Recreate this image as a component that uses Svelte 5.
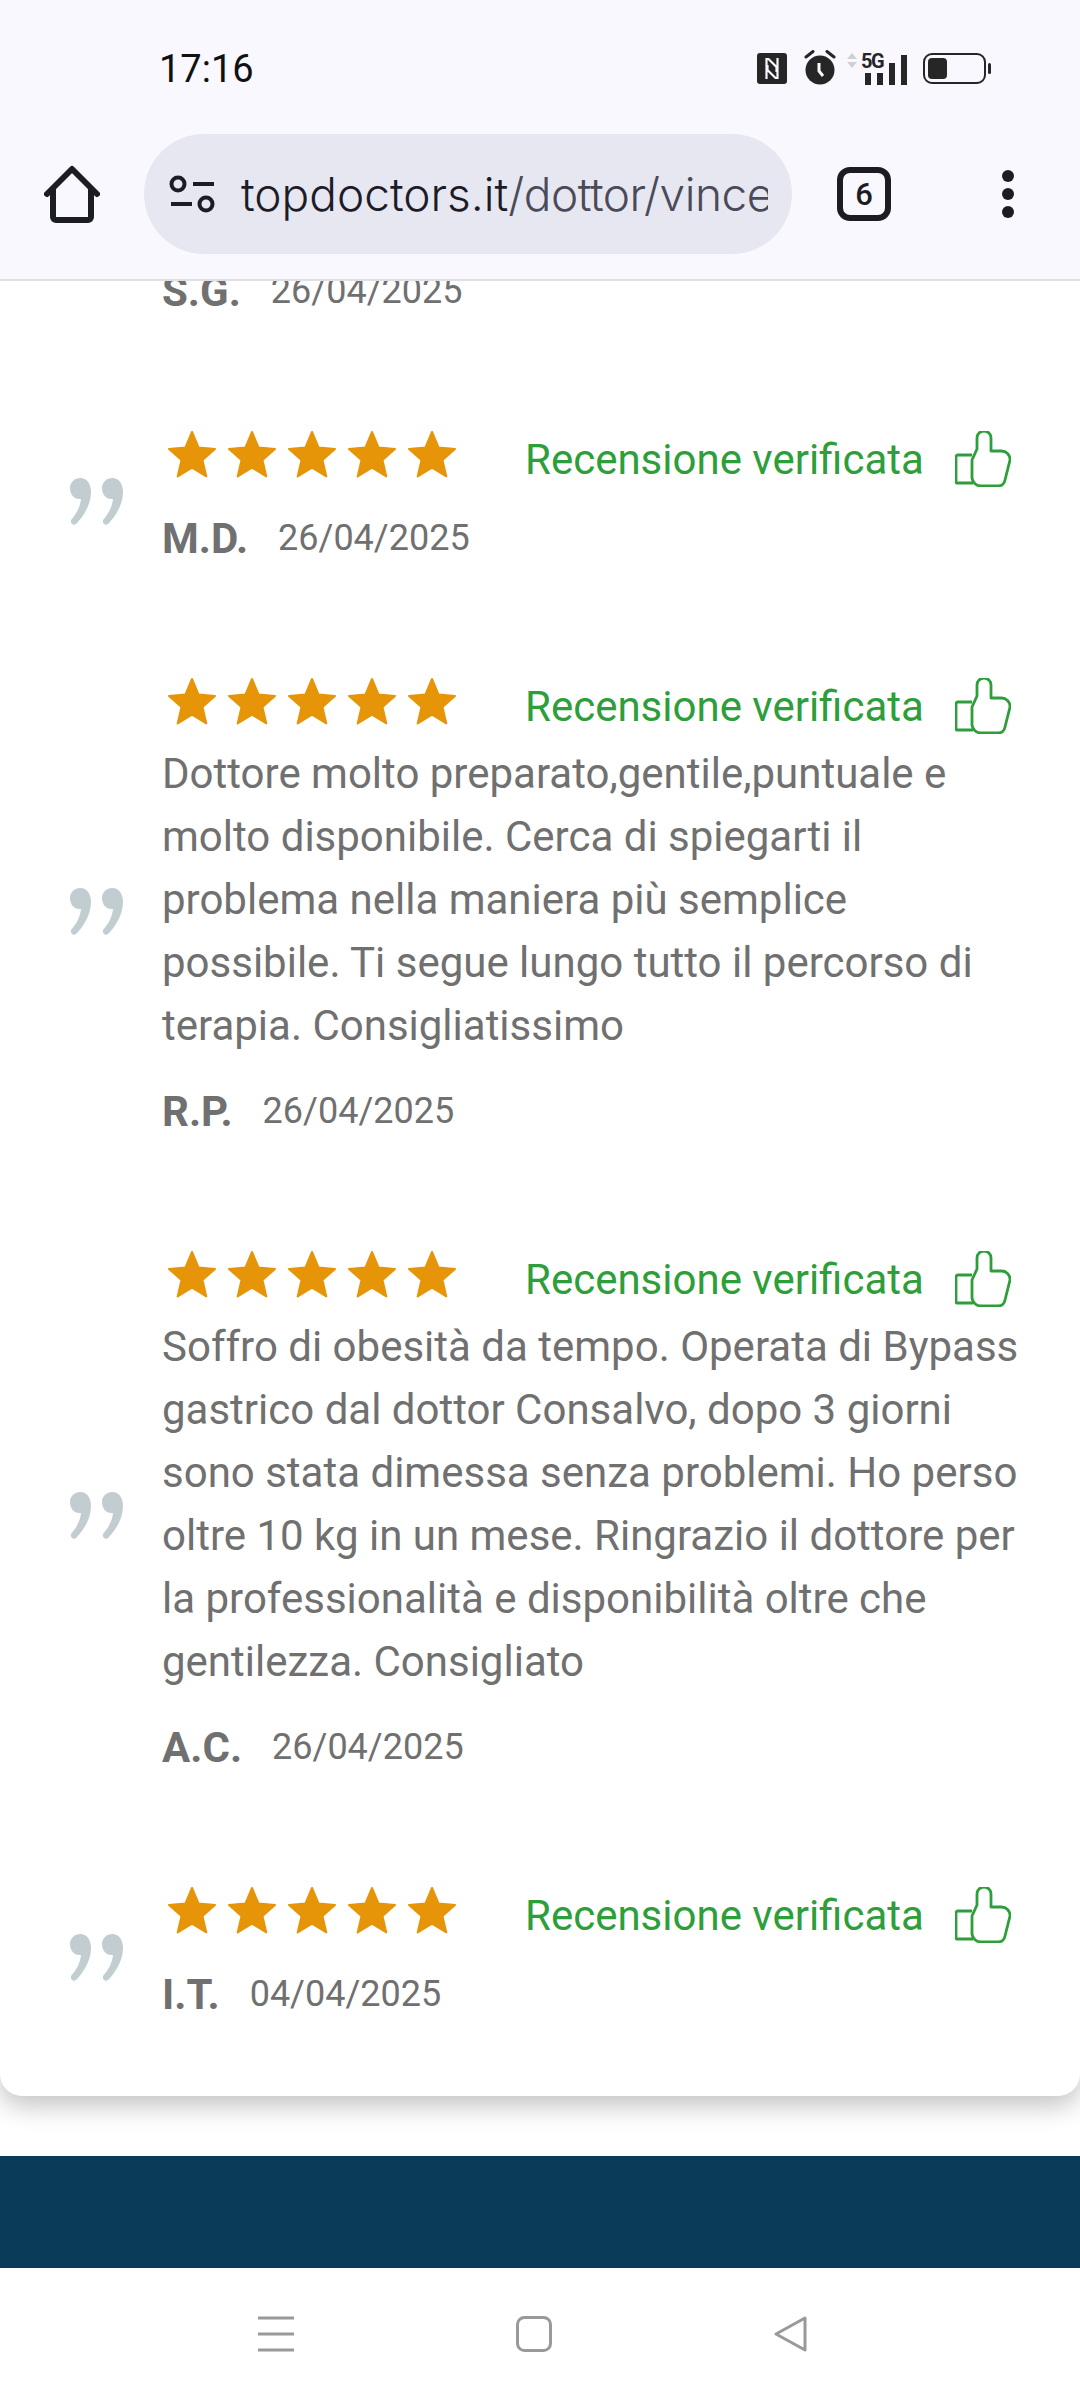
<script>
  const reviews = [
    { name: 'M.D.', date: '26/04/2025', text: '' },
    { name: 'R.P.', date: '26/04/2025', text: 'Dottore molto preparato,gentile,puntuale e molto disponibile. Cerca di spiegarti il problema nella maniera più semplice possibile. Ti segue lungo tutto il percorso di terapia. Consigliatissimo' },
    { name: 'A.C.', date: '26/04/2025', text: 'Soffro di obesità da tempo. Operata di Bypass gastrico dal dottor Consalvo, dopo 3 giorni sono stata dimessa senza problemi. Ho perso oltre 10 kg in un mese. Ringrazio il dottore per la professionalità e disponibilità oltre che gentilezza. Consigliato' },
    { name: 'I.T.', date: '04/04/2025', text: '' }
  ];
  const stars = [0, 1, 2, 3, 4];
  const comma = 'M10 0C17 0 21 6 21 14C21 27 13 39 6 46C4 48 0 46 1 42C6 36 10 30 11 21C4 22 0 16 0 10C0 4 5 0 10 0z';
</script>

<div class="screen">
  <header class="chrome">
    <div class="status">
      <span class="time">17:16</span>
      <div class="status-icons">
        <svg width="30" height="31" viewBox="0 0 30 31"><rect width="30" height="31" rx="3" fill="#262626"/><path d="M9.500 26V6h2l8 8v5M20.500 5v20h-2l-8-8v-5" fill="none" stroke="#f8f8fe" stroke-width="2.200"/></svg>
        <svg class="alarm" width="32" height="35" viewBox="0 0 32 35"><circle cx="16" cy="20" r="14.500" fill="#262626"/><path d="M9 1.500 2 7M23 1.500 30 7" stroke="#262626" stroke-width="3" stroke-linecap="round"/><path d="M15 13v8l4 5" fill="none" stroke="#f8f8fe" stroke-width="3"/></svg>
        <div class="signal">
          <svg class="arrows" width="10" height="15" viewBox="0 0 10 15"><path d="M5 0l5 6H0zM5 15l5-6H0z" fill="#cfcfd4"/></svg>
          <span class="five-g">5G</span>
          <svg width="42" height="30" viewBox="0 0 42 30"><path d="M0 18h6v12H0zM12 18h6v12h-6zM24 8h6v22h-6zM36 0h6v30h-6z" fill="#262626"/></svg>
        </div>
        <div class="battery"><span class="level"></span><span class="nub"></span></div>
      </div>
    </div>
    <div class="toolbar">
      <svg class="home" width="56" height="58" viewBox="0 0 56 58"><path d="M3 29 28 4l25 25M9 24v28a3 3 0 0 0 3 3h32a3 3 0 0 0 3-3V24" fill="none" stroke="#1c1c24" stroke-width="6" stroke-linecap="round" stroke-linejoin="round"/></svg>
      <div class="url">
        <svg width="52" height="38" viewBox="0 0 52 38"><g fill="none" stroke="#1c1c24" stroke-width="4"><circle cx="9" cy="9" r="6.500"/><circle cx="37" cy="29" r="6.500"/><path d="M24 9h21M2 29h21"/></g></svg>
        <div class="url-text"><span class="host">topdoctors.it</span><span class="path">/dottor/vincenzo-consalvo</span></div>
      </div>
      <div class="tabs">6</div>
      <div class="dots"><i></i><i></i><i></i></div>
    </div>
  </header>

  <main>
    <section class="card">
      <div class="name-row first"><b>S.G.</b><span>26/04/2025</span></div>
      {#each reviews as r}
        <article class="review">
          <svg class="quote" width="53" height="47" viewBox="0 0 53 47" fill="#c2cdd2"><path d={comma}/><path d={comma} transform="translate(32 0)"/></svg>
          <div class="body">
            <div class="top">
              <div class="stars">
                {#each stars as s}
                  <svg width="50" height="48" viewBox="0 0 50 48"><path d="M25 2l6.600 15.600 16.400 1.400-12.500 11 3.800 16.400L25 37.600 10.700 46.400l3.800-16.400L2 19l16.400-1.400z" fill="#e69508" stroke="#e69508" stroke-width="2" stroke-linejoin="round"/></svg>
                {/each}
              </div>
              <span class="verified">Recensione verificata</span>
              <svg class="thumb" width="56" height="56" viewBox="0 0 56 56"><path d="M17 24H3a2 2 0 0 0-2 2v25a1 1 0 0 0 1 1h16M17 29l5-11V7a6 6 0 0 1 14 0v13h10a8.500 8.500 0 0 1 9 9l-5 20a7 7 0 0 1-7 6H26a9 9 0 0 1-9-8z" fill="none" stroke="#2e9e3a" stroke-width="2.800" stroke-linejoin="round"/></svg>
            </div>
            {#if r.text}<p>{r.text}</p>{/if}
            <div class="name-row"><b>{r.name}</b><span>{r.date}</span></div>
          </div>
        </article>
      {/each}
    </section>
  </main>

  <div class="band"></div>

  <nav class="navbar">
    <svg width="36" height="36" viewBox="0 0 36 36"><path d="M0 2h36M0 18h36M0 34h36" stroke="#999" stroke-width="3"/></svg>
    <svg width="36" height="36" viewBox="0 0 36 36"><rect x="1.500" y="1.500" width="33" height="33" rx="7" fill="none" stroke="#999" stroke-width="3"/></svg>
    <svg width="34" height="36" viewBox="0 0 34 36"><path d="M31 2 2 18l29 16z" fill="none" stroke="#999" stroke-width="3" stroke-linejoin="round"/></svg>
  </nav>
</div>

<style>
  :global(body) { margin: 0; background: #fff; }
  .screen { width: 1080px; height: 2400px; display: flex; flex-direction: column; font-family: Roboto, sans-serif; overflow: hidden; }

  .chrome { height: 279px; background: #f8f8fe; border-bottom: 2px solid #e0e0e4; flex: none; z-index: 1; box-sizing: content-box; }
  .status { height: 134px; display: flex; align-items: center; justify-content: space-between; padding: 3px 94px 0 159px; box-sizing: border-box; }
  .time { font-size: 38px; color: #111; }
  .status-icons { display: flex; align-items: center; }
  .alarm { margin-left: 17px; margin-top: -2px; }
  .signal { display: flex; align-items: flex-end; position: relative; width: 60px; height: 32px; justify-content: flex-end; margin-left: 11px; }
  .arrows { position: absolute; left: 0; top: 0; }
  .five-g { position: absolute; left: 14px; top: -2px; font-size: 20px; line-height: 20px; font-weight: 700; color: #262626; letter-spacing: -1.500px; }
  .battery { position: relative; width: 63px; height: 31px; border: 2px solid #262626; border-radius: 9px; box-sizing: border-box; padding: 3px; margin-left: 16px; }
  .level { display: block; width: 19px; height: 100%; background: #262626; border-radius: 4px; }
  .nub { position: absolute; right: -7px; top: 8px; width: 3px; height: 11px; background: #262626; border-radius: 2px; }

  .toolbar { display: flex; align-items: center; height: 120px; }
  .home { margin-left: 44px; flex: none; }
  .url { width: 648px; height: 120px; margin-left: 44px; background: #e7e7f1; border-radius: 60px; display: flex; align-items: center; padding: 0 24px 0 25px; box-sizing: border-box; gap: 20px; flex: none; }
  .url svg { flex: none; }
  .url-text { font-family: Inter, sans-serif; font-size: 46px; font-weight: 300; white-space: nowrap; overflow: hidden; flex: 1; }
  .host { color: #1c1c28; }
  .path { color: #4a4a58; letter-spacing: -0.500px; }
  .tabs { width: 54px; height: 54px; box-sizing: border-box; border: 6px solid #1c1c24; border-radius: 13px; margin-left: 45px; display: flex; align-items: center; justify-content: center; font-size: 31px; font-weight: 500; color: #1c1c24; flex: none; }
  .dots { margin-left: 111px; display: flex; flex-direction: column; gap: 6px; flex: none; }
  .dots i { display: block; width: 12px; height: 12px; border-radius: 50%; background: #1c1c24; }

  main { flex: 1; min-height: 0; overflow: hidden; }
  .card { margin-top: -15px; background: #fff; border-radius: 0 0 22px 22px; box-shadow: 0 10px 26px rgba(0, 0, 0, 0.24); padding: 0 60px 77px 0; }
  .review { display: flex; align-items: center; margin-top: 107px; }
  .quote { flex: none; margin: 16px 39px 0 70px; }
  .body { flex: 1; min-width: 0; }
  .top { display: flex; align-items: center; height: 60px; }
  .stars { display: flex; gap: 10px; margin: 2px 0 0 5px; }
  .verified { margin: 12px 0 0 68px; font-size: 42px; color: #2e9e3a; white-space: nowrap; }
  .thumb { margin: 12px 0 0 31px; }
  p { margin: 12px 0 0; font-size: 42px; line-height: 63px; color: #707070; }
  .name-row { display: flex; align-items: center; gap: 30px; height: 50px; margin-top: 30px; color: #707070; }
  p + .name-row { margin-top: 29px; }
  .name-row.first { margin: 0 0 0 162px; }
  .name-row b { font-size: 42px; font-weight: 700; }
  .name-row span { font-size: 36px; }

  .band { height: 112px; background: #0a3c5a; flex: none; }
  .navbar { height: 132px; background: #fff; flex: none; display: flex; align-items: flex-start; padding: 48px 0 0 258px; gap: 222px; box-sizing: border-box; }
</style>
